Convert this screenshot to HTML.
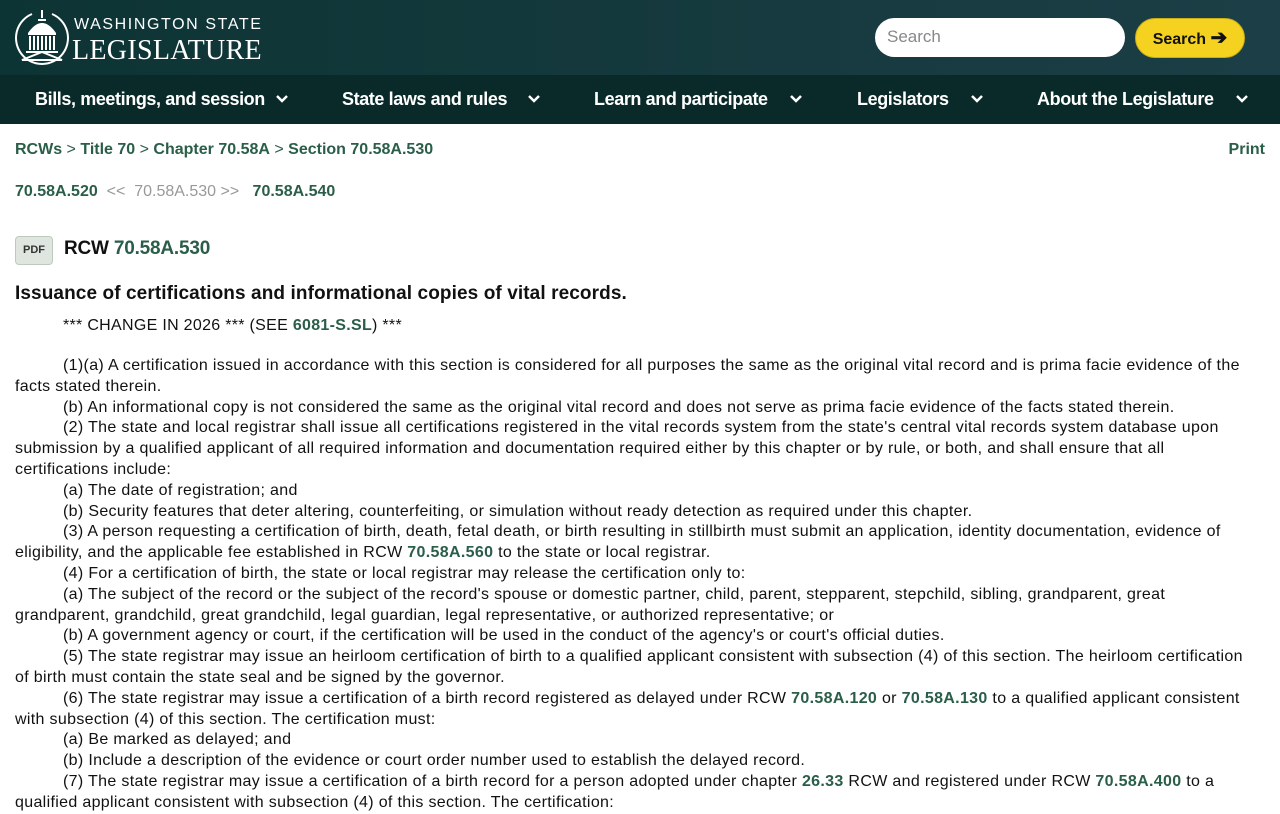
<!DOCTYPE html>
<html><head><meta charset="utf-8"><style>
*{margin:0;padding:0;box-sizing:border-box}
body{width:1280px;height:800px;overflow:hidden;font-family:"Liberation Sans",sans-serif;color:#111;background:#fff}
.hdr{height:75px;background:linear-gradient(90deg,#0d3434,#1c3e46);position:relative}
.logo{position:absolute;left:14px;top:8px}
.t1{position:absolute;left:74px;top:16px;color:#fff;font-size:16px;letter-spacing:1.6px}
.t2{position:absolute;left:72px;top:35px;color:#fff;font-family:"Liberation Serif",serif;font-size:28px;letter-spacing:0.3px}
.srch{position:absolute;left:875px;top:18px;width:250px;height:39px;border-radius:20px;background:#fff;color:#888;font-size:17px;padding:9px 12px}
.btn{position:absolute;left:1135px;top:18px;width:110px;height:40px;border-radius:20px;background:#f4d21f;border:1px solid #c9ad17;font-weight:bold;font-size:16px;color:#111;text-align:center;line-height:38px}
.nav{height:49px;background:#0a2a2a;position:relative;color:#fff;font-weight:bold;font-size:18px}
.nav span{position:absolute;top:14px;letter-spacing:-0.4px}
.nav svg{position:absolute;top:19px}
a{color:#2a5e48;font-weight:bold;text-decoration:none}
.bc{position:absolute;top:141px;left:15px;font-size:16px;color:#2a5e48}
.pr{position:absolute;top:141px;right:15px;font-size:16px}
.pn{position:absolute;top:183px;left:15px;font-size:16px}
.pdf{position:absolute;left:15px;top:236px;width:38px;height:29px;background:#dfe6df;border:1px solid #bfcabf;border-radius:4px;font-size:11px;font-weight:bold;color:#333;text-align:center;line-height:27px}
.rcw{position:absolute;left:64px;top:238px;font-size:19px;font-weight:bold;letter-spacing:-0.2px}
h1{position:absolute;left:15px;top:283px;font-size:19px;letter-spacing:0.1px}
.chg{position:absolute;left:63px;top:317px;font-size:16px;letter-spacing:0.3px}
.body{position:absolute;left:15px;top:356px;width:1245px;font-size:16px;line-height:20.8px;letter-spacing:0.33px}
.body p{text-indent:48px}
</style></head><body>
<div class="hdr">
<svg class="logo" width="56" height="58" viewBox="0 0 56 58" fill="none" stroke="#fff" stroke-width="2"><path d="M18 6 A26 26 0 1 0 38 6"/><path d="M28 2v8M24 12h8M16 24 Q28 8 40 24Z" fill="#fff"/><path d="M14 26h28M16 28v14M20 28v14M24 28v14M28 28v14M32 28v14M36 28v14M40 28v14M12 44h32M8 52 L28 44 L48 52Z"/></svg>
<div class="t1">WASHINGTON STATE</div>
<div class="t2">LEGISLATURE</div>
<div class="srch">Search</div>
<div class="btn">Search <span style="font-size:20px">➔</span></div>
</div>
<div class="nav">
<span style="left:35px">Bills, meetings, and session</span>
<span style="left:342px">State laws and rules</span>
<span style="left:594px">Learn and participate</span>
<span style="left:857px">Legislators</span>
<span style="left:1037px">About the Legislature</span>
<svg style="left:275px" width="14" height="10" viewBox="0 0 14 10" fill="none" stroke="#fff" stroke-width="2.5"><path d="M2 2l5 5 5-5"/></svg>
<svg style="left:527px" width="14" height="10" viewBox="0 0 14 10" fill="none" stroke="#fff" stroke-width="2.5"><path d="M2 2l5 5 5-5"/></svg>
<svg style="left:789px" width="14" height="10" viewBox="0 0 14 10" fill="none" stroke="#fff" stroke-width="2.5"><path d="M2 2l5 5 5-5"/></svg>
<svg style="left:970px" width="14" height="10" viewBox="0 0 14 10" fill="none" stroke="#fff" stroke-width="2.5"><path d="M2 2l5 5 5-5"/></svg>
<svg style="left:1235px" width="14" height="10" viewBox="0 0 14 10" fill="none" stroke="#fff" stroke-width="2.5"><path d="M2 2l5 5 5-5"/></svg>
</div>
<div class="bc"><a>RCWs</a> &gt; <a>Title 70</a> &gt; <a>Chapter 70.58A</a> &gt; <a>Section 70.58A.530</a></div>
<div class="pr"><a>Print</a></div>
<div class="pn"><a>70.58A.520</a> <span style="color:#999">&nbsp;&lt;&lt; &nbsp;70.58A.530 &gt;&gt;</span> &nbsp;&nbsp;<a>70.58A.540</a></div>
<div class="pdf">PDF</div>
<div class="rcw">RCW <a>70.58A.530</a></div>
<h1>Issuance of certifications and informational copies of vital records.</h1>
<div class="chg">*** CHANGE IN 2026 *** (SEE <a>6081-S.SL</a>) ***</div>
<div class="body">
<p>(1)(a) A certification issued in accordance with this section is considered for all purposes the same as the original vital record and is prima facie evidence of the facts stated therein.</p>
<p>(b) An informational copy is not considered the same as the original vital record and does not serve as prima facie evidence of the facts stated therein.</p>
<p>(2) The state and local registrar shall issue all certifications registered in the vital records system from the state's central vital records system database upon submission by a qualified applicant of all required information and documentation required either by this chapter or by rule, or both, and shall ensure that all certifications include:</p>
<p>(a) The date of registration; and</p>
<p>(b) Security features that deter altering, counterfeiting, or simulation without ready detection as required under this chapter.</p>
<p>(3) A person requesting a certification of birth, death, fetal death, or birth resulting in stillbirth must submit an application, identity documentation, evidence of eligibility, and the applicable fee established in RCW <a>70.58A.560</a> to the state or local registrar.</p>
<p>(4) For a certification of birth, the state or local registrar may release the certification only to:</p>
<p>(a) The subject of the record or the subject of the record's spouse or domestic partner, child, parent, stepparent, stepchild, sibling, grandparent, great grandparent, grandchild, great grandchild, legal guardian, legal representative, or authorized representative; or</p>
<p>(b) A government agency or court, if the certification will be used in the conduct of the agency's or court's official duties.</p>
<p>(5) The state registrar may issue an heirloom certification of birth to a qualified applicant consistent with subsection (4) of this section. The heirloom certification of birth must contain the state seal and be signed by the governor.</p>
<p>(6) The state registrar may issue a certification of a birth record registered as delayed under RCW <a>70.58A.120</a> or <a>70.58A.130</a> to a qualified applicant consistent with subsection (4) of this section. The certification must:</p>
<p>(a) Be marked as delayed; and</p>
<p>(b) Include a description of the evidence or court order number used to establish the delayed record.</p>
<p>(7) The state registrar may issue a certification of a birth record for a person adopted under chapter <a>26.33</a> RCW and registered under RCW <a>70.58A.400</a> to a qualified applicant consistent with subsection (4) of this section. The certification:</p>
</div>
</body></html>
